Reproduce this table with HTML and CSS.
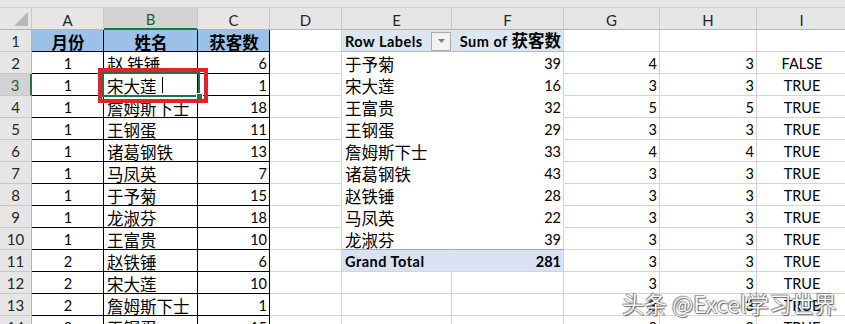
FILE: index.html
```html
<!DOCTYPE html>
<html lang="zh-CN">
<head>
<meta charset="utf-8">
<title>Excel</title>
<link rel="stylesheet" href="styles.css">
</head>
<body>
<div class="app">
  <div class="topstrip"></div>
  <div class="sheet">
    <div class="ch corner"><svg width="15" height="15" viewBox="0 0 15 15"><polygon points="0,14 14,14 14,0" fill="#b7b7b7"/></svg></div>
    <div class="ch">A</div><div class="ch sel">B</div><div class="ch">C</div><div class="ch">D</div><div class="ch">E</div><div class="ch">F</div><div class="ch">G</div><div class="ch">H</div><div class="ch">I</div>

    <div class="rh">1</div>
    <div class="c t th"><span class="zh">月份</span></div><div class="c t th"><span class="zh">姓名</span></div><div class="c t th"><span class="zh">获客数</span></div><div class="c"></div>
    <div class="c pvh pve"><span class="lat">Row Labels</span><span class="dd"><svg width="7" height="4" viewBox="0 0 7 4"><polygon points="0,0 7,0 3.5,4" fill="#7f7f7f"/></svg></span></div>
    <div class="c pvh r"><span><span class="lat">Sum of </span><span class="zh">获客数</span></span></div>
    <div class="c"></div><div class="c"></div><div class="c"></div>

    <div class="rh">2</div>
    <div class="c t ctr">1</div><div class="c t"><span class="zh">赵 铁锤</span></div><div class="c t r">6</div><div class="c"></div>
    <div class="c pvb pve"><span class="zh">于予菊</span></div><div class="c pvb r">39</div>
    <div class="c r">4</div><div class="c r">3</div><div class="c ctr">FALSE</div>

    <div class="rh sel">3</div>
    <div class="c t ctr">1</div><div class="c t"><span class="zh">宋大莲</span><span class="caret"></span></div><div class="c t r">1</div><div class="c"></div>
    <div class="c pvb pve"><span class="zh">宋大莲</span></div><div class="c pvb r">16</div>
    <div class="c r">3</div><div class="c r">3</div><div class="c ctr">TRUE</div>

    <div class="rh">4</div>
    <div class="c t ctr">1</div><div class="c t"><span class="zh">詹姆斯下士</span></div><div class="c t r">18</div><div class="c"></div>
    <div class="c pvb pve"><span class="zh">王富贵</span></div><div class="c pvb r">32</div>
    <div class="c r">5</div><div class="c r">5</div><div class="c ctr">TRUE</div>

    <div class="rh">5</div>
    <div class="c t ctr">1</div><div class="c t"><span class="zh">王钢蛋</span></div><div class="c t r">11</div><div class="c"></div>
    <div class="c pvb pve"><span class="zh">王钢蛋</span></div><div class="c pvb r">29</div>
    <div class="c r">3</div><div class="c r">3</div><div class="c ctr">TRUE</div>

    <div class="rh">6</div>
    <div class="c t ctr">1</div><div class="c t"><span class="zh">诸葛钢铁</span></div><div class="c t r">13</div><div class="c"></div>
    <div class="c pvb pve"><span class="zh">詹姆斯下士</span></div><div class="c pvb r">33</div>
    <div class="c r">4</div><div class="c r">4</div><div class="c ctr">TRUE</div>

    <div class="rh">7</div>
    <div class="c t ctr">1</div><div class="c t"><span class="zh">马凤英</span></div><div class="c t r">7</div><div class="c"></div>
    <div class="c pvb pve"><span class="zh">诸葛钢铁</span></div><div class="c pvb r">43</div>
    <div class="c r">3</div><div class="c r">3</div><div class="c ctr">TRUE</div>

    <div class="rh">8</div>
    <div class="c t ctr">1</div><div class="c t"><span class="zh">于予菊</span></div><div class="c t r">15</div><div class="c"></div>
    <div class="c pvb pve"><span class="zh">赵铁锤</span></div><div class="c pvb r">28</div>
    <div class="c r">3</div><div class="c r">3</div><div class="c ctr">TRUE</div>

    <div class="rh">9</div>
    <div class="c t ctr">1</div><div class="c t"><span class="zh">龙淑芬</span></div><div class="c t r">18</div><div class="c"></div>
    <div class="c pvb pve"><span class="zh">马凤英</span></div><div class="c pvb r">22</div>
    <div class="c r">3</div><div class="c r">3</div><div class="c ctr">TRUE</div>

    <div class="rh">10</div>
    <div class="c t ctr">1</div><div class="c t"><span class="zh">王富贵</span></div><div class="c t r">10</div><div class="c"></div>
    <div class="c pvb pvlast pve"><span class="zh">龙淑芬</span></div><div class="c pvb pvlast r">39</div>
    <div class="c r">3</div><div class="c r">3</div><div class="c ctr">TRUE</div>

    <div class="rh">11</div>
    <div class="c t ctr">2</div><div class="c t"><span class="zh">赵铁锤</span></div><div class="c t r">6</div><div class="c"></div>
    <div class="c pvt pve"><span class="lat">Grand Total</span></div><div class="c pvt r">281</div>
    <div class="c r">3</div><div class="c r">3</div><div class="c ctr">TRUE</div>

    <div class="rh">12</div>
    <div class="c t ctr">2</div><div class="c t"><span class="zh">宋大莲</span></div><div class="c t r">10</div><div class="c"></div>
    <div class="c"></div><div class="c"></div>
    <div class="c r">3</div><div class="c r">3</div><div class="c ctr">TRUE</div>

    <div class="rh">13</div>
    <div class="c t ctr">2</div><div class="c t"><span class="zh">詹姆斯下士</span></div><div class="c t r">1</div><div class="c"></div>
    <div class="c"></div><div class="c"></div>
    <div class="c r">3</div><div class="c r">3</div><div class="c ctr">TRUE</div>

    <div class="rh">14</div>
    <div class="c t ctr">2</div><div class="c t"><span class="zh">王钢蛋</span></div><div class="c t r">15</div><div class="c"></div>
    <div class="c"></div><div class="c"></div>
    <div class="c r">3</div><div class="c r">3</div><div class="c ctr">TRUE</div>
  </div>

  <div class="selbox"><span class="handle"></span></div>
  <div class="redbox"></div>
  <div class="watermark">头条 @Excel学习世界</div>
</div>
</body>
</html>
```

FILE: styles.css
```css
html, body {
  margin: 0;
  padding: 0;
  background: #ffffff;
}

.app {
  position: relative;
  width: 845px;
  height: 324px;
  overflow: hidden;
  font-family: "Lato", "Noto Sans CJK SC", sans-serif;
  font-size: 14.5px;
  color: #000;
}

.topstrip {
  height: 7px;
  background: #e6e6e6;
  border-bottom: 1px solid #d2d2d2;
}

.sheet {
  display: grid;
  grid-template-columns: 32px 72px 94px 72px 72px 110px 112px 96px 97px 90px;
  grid-auto-rows: 22px;
}

.sheet > div {
  box-sizing: border-box;
  min-width: 0;
}

.ch {
  background: #e6e6e6;
  border-right: 1px solid #c8c8c8;
  border-bottom: 1px solid #b4b4b4;
  display: flex;
  align-items: center;
  justify-content: center;
  color: #262626;
  font-size: 15px;
  padding-top: 2px;
}

.ch.sel {
  background: #d3d3d3;
  border-bottom: 2px solid #217346;
  color: #1d5e36;
}

.ch.corner {
  justify-content: flex-end;
  align-items: flex-end;
  padding: 0 2px 2px 0;
}

.ch.corner svg {
  display: block;
}

.rh {
  background: #e6e6e6;
  border-right: 1px solid #b4b4b4;
  border-bottom: 1px solid #c8c8c8;
  display: flex;
  align-items: center;
  justify-content: center;
  color: #262626;
  font-size: 15px;
  padding-top: 1px;
}

.rh.sel {
  background: #d3d3d3;
  border-right: 2px solid #217346;
  color: #1d5e36;
}

.c {
  border-right: 1px solid #d4d4d4;
  border-bottom: 1px solid #d4d4d4;
  display: flex;
  align-items: flex-end;
  padding: 0 2px 0 3px;
  line-height: 18px;
  white-space: nowrap;
}

.zh {
  font-family: "Noto Sans CJK SC", sans-serif;
  font-size: 16.5px;
}

.lat {
  letter-spacing: 0.5px;
}

.r {
  justify-content: flex-end;
}

.ctr {
  justify-content: center;
}

.t {
  border-right-color: #000;
  border-bottom-color: #000;
}

.th {
  background: #9bc2e6;
  font-weight: 700;
  justify-content: center;
}

.pvh {
  background: #dce6f1;
  border-bottom-color: #a6bde0;
  font-weight: 700;
}

.pvh.pve {
  border-right-color: #dce6f1;
  padding-right: 0;
}

.pvb {
  border-bottom-color: #ffffff;
}

.pvb.pve {
  border-right-color: #ffffff;
}

.pvlast {
  border-bottom-color: #8ea9db;
}

.pvt {
  background: #d9e1f2;
  font-weight: 700;
}

.pvt.pve {
  border-right-color: #d9e1f2;
}

.dd {
  margin-left: auto;
  align-self: center;
  width: 20px;
  height: 19px;
  box-sizing: border-box;
  background: #f2f2f2;
  border: 1px solid #ababab;
  display: flex;
  align-items: center;
  justify-content: center;
  margin-top: 1px;
}

.dd svg {
  display: block;
}

.caret {
  display: inline-block;
  width: 1px;
  height: 16px;
  background: #000;
  margin-left: 5px;
  margin-bottom: 2px;
}

.selbox {
  position: absolute;
  left: 102px;
  top: 72px;
  width: 98px;
  height: 25px;
  box-sizing: border-box;
  border: 2px solid #217346;
}

.handle {
  position: absolute;
  right: -5px;
  bottom: -5px;
  width: 7px;
  height: 7px;
  box-sizing: border-box;
  background: #217346;
  border: 1px solid #ffffff;
}

.redbox {
  position: absolute;
  left: 98px;
  top: 68px;
  width: 110px;
  height: 35px;
  box-sizing: border-box;
  border: 4px solid #e3232b;
}

.watermark {
  position: absolute;
  left: 622px;
  top: 291px;
  font-family: "Noto Sans CJK SC", sans-serif;
  font-size: 22.5px;
  line-height: 24px;
  color: #f7f7f7;
  white-space: nowrap;
  text-shadow: 0 0 1px #333, 1px 1px 1px rgba(0, 0, 0, 0.55), -1px -1px 1px rgba(0, 0, 0, 0.35);
}
```
